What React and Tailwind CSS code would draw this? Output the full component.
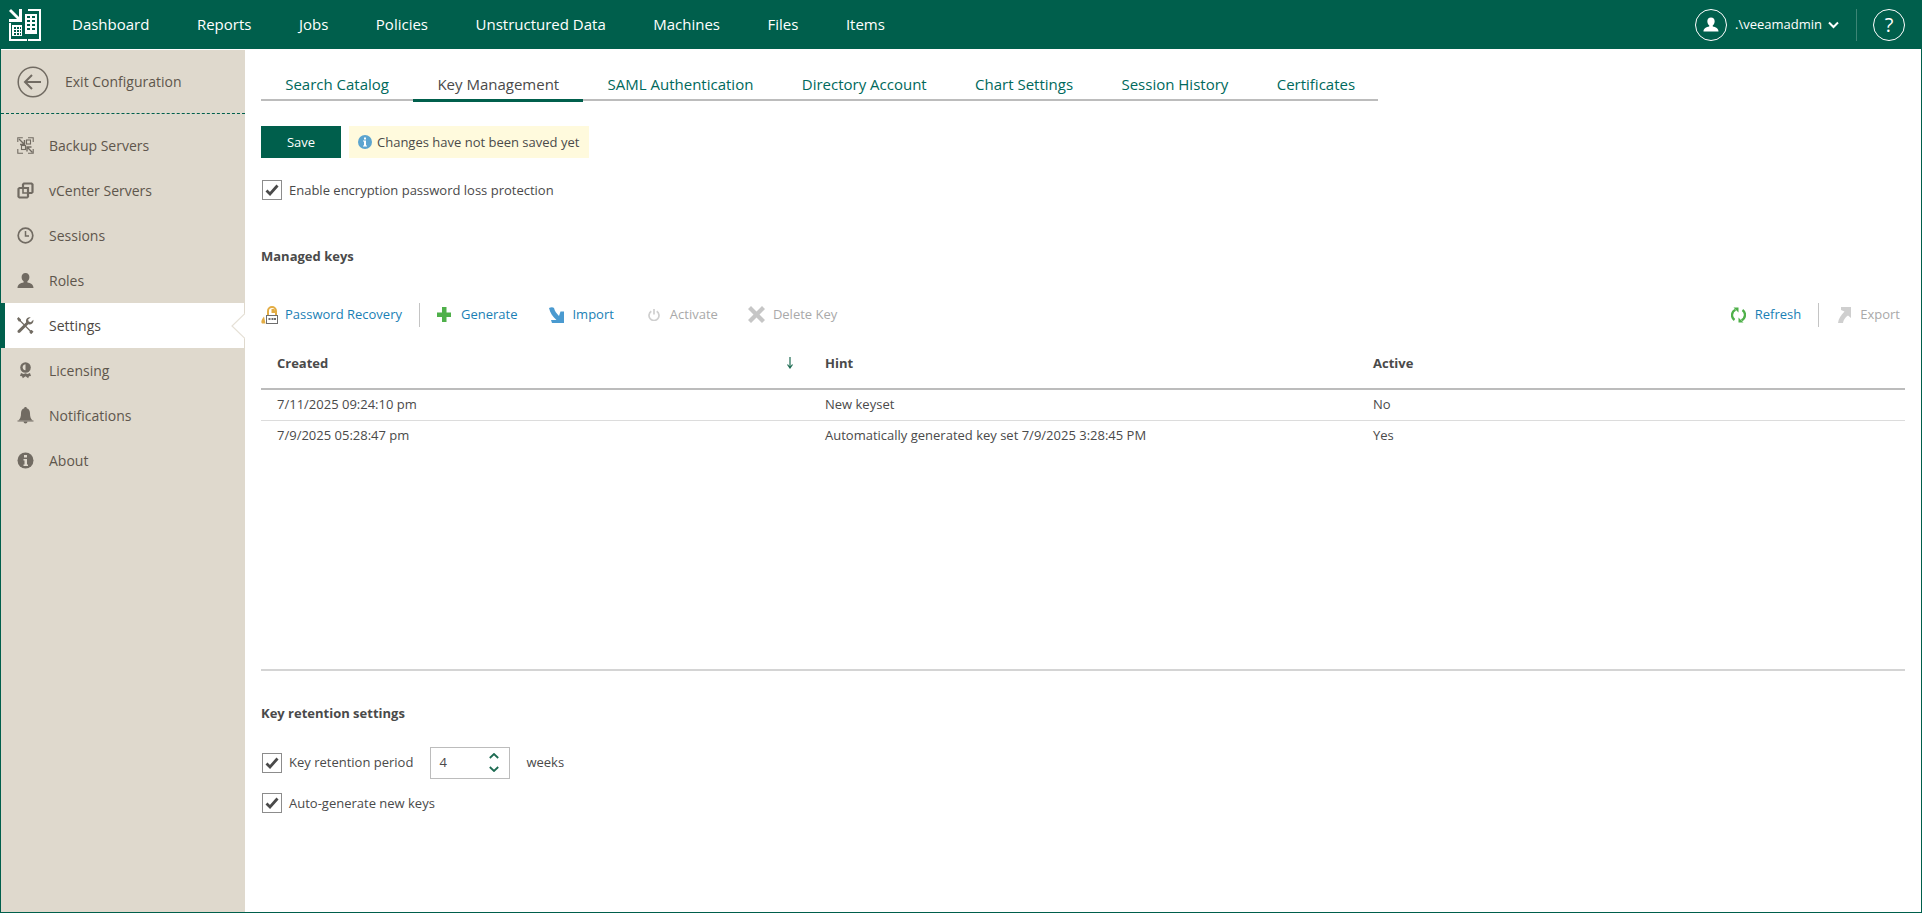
import React from "react";

const Logo = () => (
  <svg width="32" height="32" viewBox="0 0 32 32" className="shrink-0">
    <g fill="#fff">
      <path d="M0 2l2-2 8 8V0h3v13H0v-3h8z" />
      <path d="M0 14h2v16h16v2H0z" />
      <path d="M3 16h10v11H3z" />
      <path d="M16 5h12v20H16z" />
      <path d="M19 0h13v32H19v-2h11V2H19z" />
    </g>
    <g fill="#005f4c">
      <path d="M5 18h2v2H5zM8 18h2v2H8zM11 18h1v2h-1zM5 21h2v2H5zM8 21h2v2H8zM11 21h1v2h-1zM5 24h2v2H5zM8 24h2v2H8zM11 24h1v2h-1z" />
      <path d="M18 7h3v2h-3zM23 7h3v2h-3zM18 11h3v2h-3zM23 11h3v2h-3zM18 15h3v2h-3zM23 15h3v2h-3zM18 19h3v2h-3zM23 19h3v2h-3z" />
    </g>
  </svg>
);

const G = "#716b62";
const BG = "#dfd9cd";
const icons = {
  backup: (
    <g fill="none" stroke={G} strokeWidth="1.100">
      <path d="M.8 5V.8h5M11 .8h5.200V5M16.200 12v4.200H11M6 16.200H.8V12" />
      <path d="M2 2l5 5M7.500 3v4.500H3" strokeWidth="1.400" />
      <path d="M15.500 15.500l-5-5M10 14.500V10h4.500" strokeWidth="1.400" />
      <rect x="4.500" y="8.500" width="4" height="4" />
      <rect x="9.500" y="3" width="4" height="4" />
    </g>
  ),
  vcenter: (
    <g fill="none" stroke={G} strokeWidth="2.200">
      <path d="M6 5V2.500L7 1.500h7.500l1 1V10l-1 1H11" />
      <path d="M2.500 6H11v8.500l-1 1H2.500l-1-1V7z" />
      <path d="M6 6v5h5" strokeWidth="1.600" />
    </g>
  ),
  clock: (
    <g fill="none" stroke={G}>
      <circle cx="8.500" cy="8.500" r="7.300" strokeWidth="1.700" />
      <path d="M8.500 4v5h3.500" strokeWidth="1.500" />
    </g>
  ),
  user: (
    <path
      fill={G}
      d="M8.500 1C6 1 4.600 2.700 4.600 5c0 2 .9 3.600 2 4.300v1.200C3.500 11.200.5 12.200.5 16h16c0-3.800-3-4.800-6.100-5.500V9.300c1.100-.7 2-2.300 2-4.300 0-2.300-1.400-4-3.900-4z"
    />
  ),
  tools: (
    <g fill={G}>
      <path d="M1.500 0L4 2.500v1.200l9.500 9.600 1.300-.2 1.700 1.700-2.300 2.400-1.700-1.700.1-1.300L3 4.500H1.800L0 1.800z" />
      <path d="M13.800.3a3.800 3.800 0 0 0-4.600 4.900L1 13.300c-.7.700-.7 1.500-.1 2.200.6.600 1.500.7 2.200 0l8.200-8.200a3.800 3.800 0 0 0 5-4.500l-2.500 2.400-2.100-.6-.6-2.100z" />
    </g>
  ),
  medal: (
    <g fill={G}>
      <circle cx="8.500" cy="5.500" r="5.300" />
      <path d="M6 3.800a3 3 0 0 1 2.500-1.500v6A3 3 0 0 1 6 3.800z" fill={BG} />
      <path d="M4 11l2.500 1 2-.7 2 .7 2.500-1 1 3-2 .3-.8 2-2.700-2-2.700 2-.8-2-2-.3z" />
    </g>
  ),
  bell: (
    <g fill={G}>
      <path d="M8.500 0c.8 0 1.300.5 1.300 1.300 2.400.7 3.200 2.700 3.200 5.200 0 3 .7 5 2.500 7H1.500c1.800-2 2.500-4 2.500-7 0-2.500.8-4.500 3.200-5.200C7.200.5 7.700 0 8.500 0z" />
      <path d="M6.500 14.500h4a2 2 0 0 1-4 0z" />
      <path d="M.5 13.500h16v1H.5z" />
    </g>
  ),
  info: (
    <g>
      <circle cx="8.500" cy="8.500" r="8" fill={G} />
      <rect x="7" y="3" width="3" height="2.500" fill={BG} />
      <path d="M6.500 7H10v5.500h1V14H6.500v-1.500h1V8.500h-1z" fill={BG} />
    </g>
  ),
};

const Nav = ({ icon, label, active }) => (
  <div
    className={
      active
        ? "relative flex h-[45px] items-center border-l-[4px] border-r border-[#dfd9cd] border-l-[#005f4c] bg-white pl-[12px] text-[#4d4843]"
        : "flex h-[45px] items-center pl-[16px] text-[#5e564c]"
    }
  >
    <svg width="17" height="17" viewBox="0 0 17 17" className="shrink-0">
      {icons[icon]}
    </svg>
    <span className="ml-[15px] text-[14px] leading-none">{label}</span>
    {active && (
      <svg width="14" height="26" viewBox="0 0 14 26" className="absolute right-[-1px] top-[10px]">
        <path d="M14 .5L1 13l13 12.500" fill="#fff" stroke="#e6e1d7" strokeWidth="1.200" />
      </svg>
    )}
  </div>
);

const Check = () => (
  <span className="flex h-[20px] w-[20px] shrink-0 items-center justify-center border border-[#8c8c8c] bg-white">
    <svg width="14" height="12" viewBox="0 0 14 12">
      <path d="M1.500 6.500l3.500 3.500 7.500-8.500" fill="none" stroke="#4a4a4a" strokeWidth="2.800" />
    </svg>
  </span>
);

const Tool = ({ icon, label, color, className = "" }) => (
  <div className={"flex items-center " + className}>
    {icon}
    <span className={"pt-px text-[13px] " + color}>{label}</span>
  </div>
);

const Sep = ({ cls }) => <span className={"h-[24px] w-px bg-[#c4c4c4] " + cls} />;

const tabs = ["Search Catalog", "Key Management", "SAML Authentication", "Directory Account", "Chart Settings", "Session History", "Certificates"];

export default function App() {
  return (
    <div className="flex h-screen flex-col overflow-hidden border-x border-b border-[#005f4c] bg-white font-['Open_Sans',sans-serif] text-[13px] text-[#4a4a4a]">
      <header className="-mx-px flex h-[49px] shrink-0 items-center bg-[#005f4c] pl-[9px] text-white">
        <Logo />
        <nav className="ml-[31px] flex gap-[47.500px] text-[15px]">
          {["Dashboard", "Reports", "Jobs", "Policies", "Unstructured Data", "Machines", "Files", "Items"].map((t) => (
            <span key={t}>{t}</span>
          ))}
        </nav>
        <div className="ml-auto flex items-center pr-[17px]">
          <span className="flex h-[32px] w-[32px] items-center justify-center rounded-full border-[1.500px] border-white">
            <svg width="16" height="17" viewBox="0 0 17 17">
              <path fill="#fff" d="M8.500 1C6 1 4.600 2.700 4.600 5c0 2 .9 3.600 2 4.300v1.200C3.500 11.200.5 12.200.5 16h16c0-3.800-3-4.800-6.100-5.500V9.300c1.100-.7 2-2.300 2-4.300 0-2.300-1.400-4-3.900-4z" />
            </svg>
          </span>
          <span className="ml-[8px] text-[13px]">.\veeamadmin</span>
          <svg width="11" height="8" viewBox="0 0 11 8" className="ml-[6px]">
            <path d="M1 1.500l4.500 4.500L10 1.500" fill="none" stroke="#fff" strokeWidth="2" />
          </svg>
          <span className="ml-[17px] h-[32px] w-px bg-[#3d8575]" />
          <span className="ml-[16px] flex h-[32px] w-[32px] items-center justify-center rounded-full border-[1.500px] border-white text-[20px]">?</span>
        </div>
      </header>

      <div className="flex min-h-0 flex-1 pt-px">
        <aside className="w-[244px] shrink-0 bg-[#dfd9cd]">
          <div className="flex h-[64px] items-center border-b border-dashed border-[#005f4c] pl-[16px] text-[#5e564c]">
            <svg width="32" height="32" viewBox="0 0 32 32" className="shrink-0">
              <circle cx="16" cy="16" r="14.800" fill="none" stroke="#716b62" strokeWidth="1.500" />
              <path d="M8 16h16M15 9l-7 7 7 7" fill="none" stroke="#716b62" strokeWidth="2" />
            </svg>
            <span className="ml-[16px] text-[14px] leading-none">Exit Configuration</span>
          </div>
          <div className="pt-[9px]">
            <Nav icon="backup" label="Backup Servers" />
            <Nav icon="vcenter" label="vCenter Servers" />
            <Nav icon="clock" label="Sessions" />
            <Nav icon="user" label="Roles" />
            <Nav icon="tools" label="Settings" active />
            <Nav icon="medal" label="Licensing" />
            <Nav icon="bell" label="Notifications" />
            <Nav icon="info" label="About" />
          </div>
        </aside>

        <main className="min-w-0 flex-1 pl-[16px] pr-[16px]">
          <div className="mt-[16px] flex h-[35px] w-[1117px] border-b-2 border-[#bcbcbc]">
            {tabs.map((t, i) => (
              <div
                key={t}
                className={
                  i === 1
                    ? "-mb-[2px] h-[36px] shrink-0 whitespace-nowrap border-b-[3px] border-[#005f4c] px-[24.200px] pt-[7px] text-[15px] leading-[22px] text-[#4a4a4a]"
                    : "shrink-0 whitespace-nowrap px-[24.200px] pt-[7px] text-[15px] leading-[22px] text-[#00695c]"
                }
              >
                {t}
              </div>
            ))}
          </div>

          <div className="mt-[25px] flex h-[32px] gap-[8px]">
            <button className="w-[80px] bg-[#005f4c] pt-px text-[13px] text-white">Save</button>
            <div className="flex items-center bg-[#fffadd] pl-[9px] pr-[10px]">
              <svg width="14" height="14" viewBox="0 0 14 14" className="mr-[5px]">
                <circle cx="7" cy="7" r="7" fill="#5ba4cf" />
                <rect x="6" y="2.500" width="2" height="2" fill="#fff" />
                <path d="M5 5.500h3V10.500h1V11.500H5V10.500h1V6.500H5z" fill="#fff" />
              </svg>
              <span className="pt-px">Changes have not been saved yet</span>
            </div>
          </div>

          <label className="ml-px mt-[22px] flex items-center gap-[7px]">
            <Check />
            <span className="pt-px">Enable encryption password loss protection</span>
          </label>

          <div className="mt-[46px] font-bold leading-[18px]">Managed keys</div>

          <div className="mt-[38px] flex h-[24px] items-center">
            <Tool
              color="text-[#1a7fb5]"
              label="Password Recovery"
              icon={
                <svg width="17" height="18" viewBox="0 0 17 18" className="mr-[7px]">
                  <path d="M7 9V5a4 4 0 0 1 8 0v4" fill="none" stroke="#e3ad45" strokeWidth="2" />
                  <path d="M10.500 3h3l1 4h-4z" fill="#e3ad45" />
                  <path d="M1 17.500c-1.300-1.300-.6-4 2-7l1.500 7z" fill="#e3ad45" />
                  <rect x="5.500" y="9.500" width="11" height="8" fill="#fff" stroke="#6e6e6e" />
                  <path d="M7.500 12h2v2h-2zM10.500 12h2v2h-2zM13 12h2v2h-2z" fill="#6e6e6e" />
                </svg>
              }
            />
            <Sep cls="ml-[17px]" />
            <Tool
              className="ml-[17px]"
              color="text-[#1a7fb5]"
              label="Generate"
              icon={
                <svg width="14" height="15" viewBox="0 0 14 15" className="mr-[10px]">
                  <path d="M5 0h4.500v5.500H14V10H9.500v5H5v-5H0V5.500h5z" fill="#4fb04a" />
                </svg>
              }
            />
            <Tool
              className="ml-[32px]"
              color="text-[#1a7fb5]"
              label="Import"
              icon={
                <svg width="15" height="16" viewBox="0 0 15 16" className="mr-[8px]">
                  <path d="M0 1C2 0 4 0 5 1c.7 3 2.500 5.500 5 8l1.500-4.500H15V16H3l-1-3h5.500C4 10 1 6 0 1z" fill="#4a9ad0" />
                </svg>
              }
            />
            <Tool
              className="ml-[34px]"
              color="text-[#a9a9a9]"
              label="Activate"
              icon={
                <svg width="12" height="12" viewBox="0 0 12 12" className="mr-[10px]">
                  <path d="M3.300 2.300a5 5 0 1 0 5.400 0" fill="none" stroke="#cfcfcf" strokeWidth="1.700" />
                  <path d="M6 0v5.500" fill="none" stroke="#cfcfcf" strokeWidth="1.700" />
                </svg>
              }
            />
            <Tool
              className="ml-[30px]"
              color="text-[#a9a9a9]"
              label="Delete Key"
              icon={
                <svg width="17" height="17" viewBox="0 0 17 17" className="mr-[8px]">
                  <path d="M0 3l3-3 5.500 5.500L14 0l3 3-5.500 5.500L17 14l-3 3-5.500-5.500L3 17l-3-3 5.500-5.500z" fill="#c6c6c6" />
                </svg>
              }
            />
            <Tool
              className="ml-auto"
              color="text-[#1a7fb5]"
              label="Refresh"
              icon={
                <svg width="15" height="16" viewBox="0 0 15 16" className="mr-[9px]">
                  <g fill="none" stroke="#4fb04a" strokeWidth="2.300">
                    <path d="M3.500 13A6 6 0 0 1 4.500 2.700" />
                    <path d="M11.500 3A6 6 0 0 1 10.500 13.300" />
                  </g>
                  <path d="M2.500 .5h5v5zM12.500 15.500h-5v-5z" fill="#4fb04a" />
                </svg>
              }
            />
            <Sep cls="ml-[17px]" />
            <Tool
              className="ml-[19px] mr-[5px]"
              color="text-[#a9a9a9]"
              label="Export"
              icon={
                <svg width="13" height="16" viewBox="0 0 13 16" className="mr-[9px]">
                  <path d="M3 0h10v11l-3-2.500C7 10.500 5.500 13 5 16H0c.5-4.500 3-8 6.500-11.500L3 3z" fill="#cfcfcf" />
                </svg>
              }
            />
          </div>

          <div className="mt-[15px] grid h-[48px] grid-cols-3 items-center border-b-2 border-[#bcbcbc] pb-px font-bold">
            <div className="relative pl-[16px]">
              Created
              <svg width="8" height="12" viewBox="0 0 8 12" className="absolute right-[15px] top-[3px]">
                <path d="M4 0v10M1.500 7.500L4 11l2.500-3.500" fill="none" stroke="#1d6b52" strokeWidth="1.200" />
              </svg>
            </div>
            <div className="pl-[16px]">Hint</div>
            <div className="pl-[16px]">Active</div>
          </div>
          <div className="grid h-[31px] grid-cols-3 items-center border-b border-[#dcdcdc] pt-px">
            <div className="pl-[16px]">7/11/2025 09:24:10 pm</div>
            <div className="pl-[16px]">New keyset</div>
            <div className="pl-[16px]">No</div>
          </div>
          <div className="grid h-[31px] grid-cols-3 items-center">
            <div className="pl-[16px]">7/9/2025 05:28:47 pm</div>
            <div className="pl-[16px]">Automatically generated key set 7/9/2025 3:28:45 PM</div>
            <div className="pl-[16px]">Yes</div>
          </div>

          <div className="mt-[217px] h-[2px] bg-[#d4d4d4]" />

          <div className="mt-[33px] font-bold leading-[18px]">Key retention settings</div>

          <div className="ml-px mt-[25px] flex h-[32px] items-center">
            <Check />
            <span className="ml-[7px] pt-px">Key retention period</span>
            <div className="ml-[17px] flex h-[32px] w-[80px] items-center justify-between border border-[#bcbcbc] pl-[8px] pr-[10px]">
              <span className="pt-px">4</span>
              <span className="flex flex-col gap-[7px]">
                <svg width="10" height="6" viewBox="0 0 10 6"><path d="M.8 5L5 1l4.200 4" fill="none" stroke="#1d6b52" strokeWidth="1.800" /></svg>
                <svg width="10" height="6" viewBox="0 0 10 6"><path d="M.8 1L5 5l4.200-4" fill="none" stroke="#1d6b52" strokeWidth="1.800" /></svg>
              </span>
            </div>
            <span className="ml-[16px] pt-px">weeks</span>
          </div>
          <label className="ml-px mt-[14px] flex items-center gap-[7px]">
            <Check />
            <span className="pt-px">Auto-generate new keys</span>
          </label>
        </main>
      </div>
    </div>
  );
}
